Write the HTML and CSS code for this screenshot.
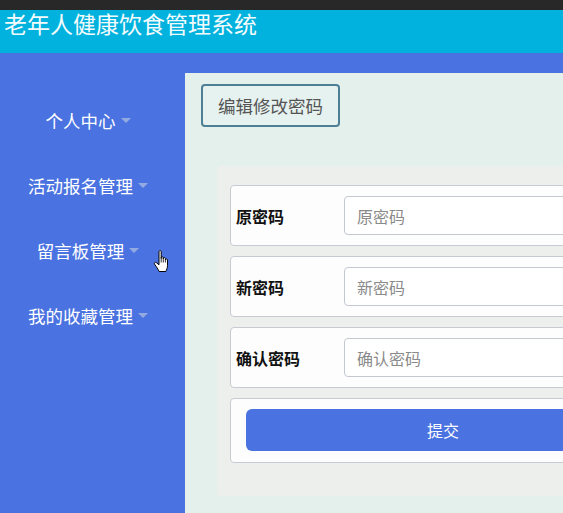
FILE: index.html
```html
<!DOCTYPE html>
<html lang="zh-CN">
<head>
    <meta charset="UTF-8">
    <meta name="viewport" content="width=device-width, initial-scale=1.0">
    <title>老年人健康饮食管理系统</title>
    <link rel="stylesheet" href="styles.css">
</head>
<body>
    <div class="topbar"></div>
    <header class="header">
        <h1>老年人健康饮食管理系统</h1>
    </header>

    <div class="layout">
        <nav class="sidebar">
            <ul>
                <li><a href="#">个人中心<span class="caret"></span></a></li>
                <li><a href="#">活动报名管理<span class="caret"></span></a></li>
                <li><a href="#">留言板管理<span class="caret"></span></a></li>
                <li><a href="#">我的收藏管理<span class="caret"></span></a></li>
            </ul>
        </nav>

        <main class="content">
            <button class="btn-edit" type="button">编辑修改密码</button>

            <form class="card">
                <div class="row">
                    <label>原密码</label>
                    <input type="password" placeholder="原密码">
                </div>
                <div class="row">
                    <label>新密码</label>
                    <input type="password" placeholder="新密码">
                </div>
                <div class="row">
                    <label>确认密码</label>
                    <input type="password" placeholder="确认密码">
                </div>
                <div class="row submit">
                    <button type="submit">提交</button>
                </div>
            </form>
        </main>
    </div>

    <!-- puntero del ratón en la captura -->
    <svg class="cursor" width="18" height="23" viewBox="0 0 18 23">
        <path d="M6 1.5C6 0.3 8.2 0.3 8.2 1.5L8.2 8.6L8.2 7.6C8.2 6.5 10.3 6.5 10.3 7.6L10.3 9L10.3 8.4C10.3 7.3 12.4 7.3 12.4 8.4L12.4 9.8C12.4 8.8 14.5 8.8 14.5 9.9L14.5 15.5C14.5 18 13.6 19.8 12.8 21.5L6.2 21.5C5.2 19.5 3.4 16.8 1.6 14.2C0.9 13 2.2 11.8 3.3 12.6L6 14.8Z" fill="#fff" stroke="#000" stroke-width="1" stroke-linejoin="round"/>
        <path d="M8.2 8.6V12.5M10.3 9V12.5M12.4 9.8V12.5" stroke="#000" stroke-width="0.8"/>
    </svg>
</body>
</html>
```

FILE: styles.css
```css
body{
    margin:0;
    font-family: "Noto Sans CJK SC", "Noto Sans", sans-serif;
    background-color: #4a72e0;
    height:100vh;
    overflow:hidden;
}

.topbar{
    height:10px;
    background-color: #282828;
}

.header{
    height:43px;
    background-color: #00b2dd;

    h1{
        margin:0;
        padding:1px 0 0 4px;
        font-size:23px;
        font-weight:400;
        line-height:24px;
        color:#f4fbfd;
    }
}

.layout{
    display:flex;
    height:calc(100vh - 53px);
    overflow:hidden;
}

.sidebar{
    width:185px;
    flex-shrink:0;

    ul{
        list-style:none;
        margin:0;
        padding:35px 9px 0 0;
    }

    li{
        height:65px;
        display:flex;
        justify-content:center;
        align-items:center;
    }

    a{
        color:#fff;
        font-size:17.5px;
        text-decoration:none;
        display:flex;
        align-items:center;
    }
}

.caret{
    width:0;
    height:0;
    margin-left:5px;
    border-left:5px solid transparent;
    border-right:5px solid transparent;
    border-top:5px solid #93a9e2;
}

.content{
    flex:1;
    min-width:0;
    margin-top:20px;
    padding:11px 0 0 16px;
    background-color: #e3f0eb;
}

.btn-edit{
    height:43px;
    padding:0 15px;
    background-color: #e6f2ef;
    border:2px solid #4d7f95;
    border-radius:4px;
    font-family:inherit;
    font-size:17.5px;
    color:#555;
    cursor:pointer;
}

.card{
    width:452px;
    box-sizing:border-box;
    margin:39px 0 0 16px;
    padding:19px 13px 33px;
    background-color: #edefec;
    border-radius:4px;
}

.row{
    display:flex;
    align-items:center;
    padding:10px 11px 10px 5px;
    margin-bottom:10px;
    background-color: #fdfdfd;
    border:1px solid #c6cad2;
    border-radius:4px;

    label{
        width:108px;
        flex-shrink:0;
        font-size:16px;
        font-weight:700;
        color:#111;
    }

    input{
        flex:1;
        height:39px;
        box-sizing:border-box;
        padding:0 12px;
        border:1px solid #c4c8d0;
        border-radius:4px;
        font-family:inherit;
        font-size:16px;

        &::placeholder{
            color:#8a8a8a;
        }
    }

    &.submit{
        margin-bottom:0;
        padding:10px 15px 11px;

        button{
            width:100%;
            height:42px;
            border:0;
            border-radius:6px;
            background-color: #4a72e0;
            color:#fff;
            font-family:inherit;
            font-size:16px;
            cursor:pointer;
        }
    }
}

.cursor{
    position:fixed;
    left:153px;
    top:250px;
}
```
